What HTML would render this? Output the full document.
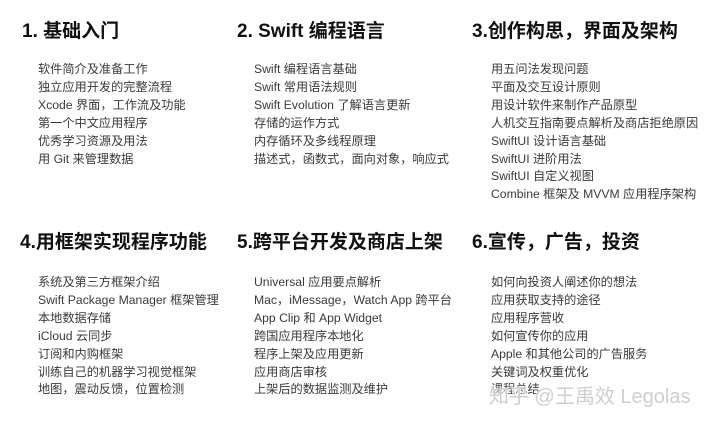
<!DOCTYPE html>
<html><head><meta charset="utf-8"><style>
body{margin:0;width:720px;height:426px;background:#fff;position:relative;overflow:hidden;font-family:"Liberation Sans","Noto Sans CJK SC",sans-serif}
.h{position:absolute;font-size:19px;font-weight:bold;color:#111;white-space:nowrap;line-height:22px}
.l{position:absolute;font-size:12.2px;color:#3a3a3a;line-height:17.9px;white-space:nowrap}
.wm{position:absolute;left:489px;top:380px;font-size:20px;color:#cfcfcf;white-space:nowrap;text-shadow:0 0 2px #fff,0 0 2px #fff}
</style></head><body>
<div class="h" style="left:22px;top:21px">1. 基础入门</div>
<div class="h" style="left:237px;top:21px">2. Swift 编程语言</div>
<div class="h" style="left:472px;top:21px">3.创作构思，界面及架构</div>
<div class="l" style="left:38px;top:61px">软件简介及准备工作<br>独立应用开发的完整流程<br>Xcode 界面，工作流及功能<br>第一个中文应用程序<br>优秀学习资源及用法<br>用 Git 来管理数据</div>
<div class="l" style="left:254px;top:61px">Swift 编程语言基础<br>Swift 常用语法规则<br>Swift Evolution 了解语言更新<br>存储的运作方式<br>内存循环及多线程原理<br>描述式，函数式，面向对象，响应式</div>
<div class="l" style="left:491px;top:61px">用五问法发现问题<br>平面及交互设计原则<br>用设计软件来制作产品原型<br>人机交互指南要点解析及商店拒绝原因<br>SwiftUI 设计语言基础<br>SwiftUI 进阶用法<br>SwiftUI 自定义视图<br>Combine 框架及 MVVM 应用程序架构</div>
<div class="h" style="left:20px;top:232px">4.用框架实现程序功能</div>
<div class="h" style="left:237px;top:232px">5.跨平台开发及商店上架</div>
<div class="h" style="left:472px;top:232px">6.宣传，广告，投资</div>
<div class="l" style="left:38px;top:274px">系统及第三方框架介绍<br>Swift Package Manager 框架管理<br>本地数据存储<br>iCloud 云同步<br>订阅和内购框架<br>训练自己的机器学习视觉框架<br>地图，震动反馈，位置检测</div>
<div class="l" style="left:254px;top:274px">Universal 应用要点解析<br>Mac，iMessage，Watch App 跨平台<br>App Clip 和 App Widget<br>跨国应用程序本地化<br>程序上架及应用更新<br>应用商店审核<br>上架后的数据监测及维护</div>
<div class="l" style="left:491px;top:274px">如何向投资人阐述你的想法<br>应用获取支持的途径<br>应用程序营收<br>如何宣传你的应用<br>Apple 和其他公司的广告服务<br>关键词及权重优化<br>课程总结</div>
<div class="wm">知乎 @王禹效 Legolas</div>
</body></html>
